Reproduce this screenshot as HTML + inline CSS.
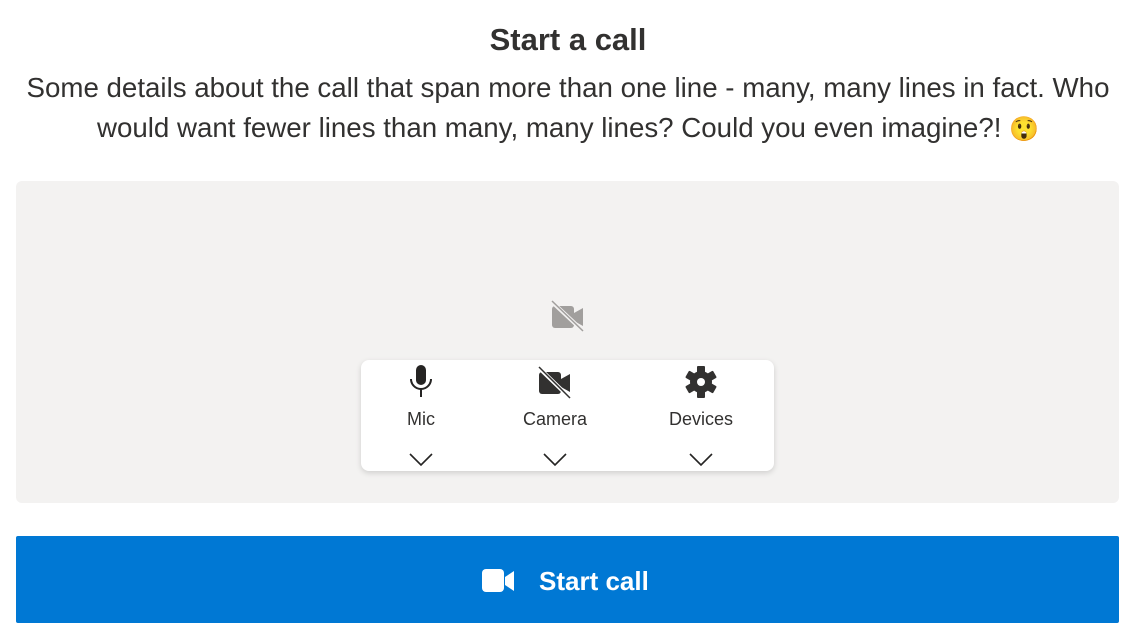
<!DOCTYPE html>
<html><head><style>
body{margin:0;width:1136px;height:640px;background:#fff;font-family:"Liberation Sans",sans-serif;color:#323130;position:relative;overflow:hidden}
.t{position:absolute;left:0;width:1136px;text-align:center;white-space:nowrap}
.panel{position:absolute;left:16px;top:181px;width:1103px;height:322px;background:#f3f2f1;border-radius:6px}
.bar{position:absolute;left:361px;top:360px;width:413px;height:111px;background:#fff;border-radius:8px;box-shadow:0 2px 6px rgba(0,0,0,.15)}
.item{position:absolute;top:0;width:120px;text-align:center}
.item svg{display:block;margin:0 auto}
.lbl{font-size:18px;position:absolute;top:49px;width:120px;text-align:center}
.chev{position:absolute;top:93px;left:48px}
.btn{position:absolute;left:16px;top:536px;width:1103px;height:87px;background:#0078d4;border-radius:2px;color:#fff}
</style></head><body>
<div class="t" style="top:22px;font-size:31px;font-weight:bold;">Start a call</div>
<div class="t" style="top:68px;font-size:27.7px;line-height:40px;">Some details about the call that span more than one line - many, many lines in fact. Who<br>would want fewer lines than many, many lines? Could you even imagine?! <span style="font-family:'Noto Color Emoji',sans-serif;font-size:24px">😲</span></div>
<div class="panel"></div>
<svg style="position:absolute;left:551px;top:300px" width="34" height="32" viewBox="0 0 34 32"><rect x="1" y="6" width="22" height="22" rx="3" fill="#a19f9d"/><path d="M23 13l9-5v18l-9-5z" fill="#a19f9d"/><path d="M0 1l32 30" stroke="#f3f2f1" stroke-width="4"/><path d="M1 1l31 30" stroke="#a19f9d" stroke-width="1.5"/></svg>
<div class="bar">
 <div class="item" style="left:0">
  <svg width="24" height="34" viewBox="0 0 24 34" style="margin-top:5px"><rect x="7" y="0" width="10" height="20" rx="5" fill="#252423"/><path d="M2 14a10 10 0 0 0 20 0" fill="none" stroke="#252423" stroke-width="2"/><path d="M12 24v8" stroke="#252423" stroke-width="2"/></svg>
  <div class="lbl">Mic</div><svg class="chev" width="24" height="14"><path d="M1 1l11 11L23 1" fill="none" stroke="#252423" stroke-width="1.6"/></svg></div>
 <div class="item" style="left:134px">
  <svg width="34" height="34" viewBox="0 0 34 34" style="margin-top:6px"><rect x="1" y="6" width="22" height="22" rx="3" fill="#323130"/><path d="M23 13l9-5v18l-9-5z" fill="#323130"/><path d="M0 1l32 31" stroke="#fff" stroke-width="4"/><path d="M1 1l31 31" stroke="#323130" stroke-width="1.5"/></svg>
  <div class="lbl">Camera</div><svg class="chev" width="24" height="14"><path d="M1 1l11 11L23 1" fill="none" stroke="#252423" stroke-width="1.6"/></svg></div>
 <div class="item" style="left:280px">
  <svg width="34" height="34" viewBox="-17 -17 34 34" style="margin-top:5px"><g fill="#323130"><circle r="11"/><g id="g"><rect x="-4" y="-16" width="8" height="8" rx="1"/></g><use href="#g" transform="rotate(60)"/><use href="#g" transform="rotate(120)"/><use href="#g" transform="rotate(180)"/><use href="#g" transform="rotate(240)"/><use href="#g" transform="rotate(300)"/></g><circle r="4" fill="#fff"/></svg>
  <div class="lbl">Devices</div><svg class="chev" width="24" height="14"><path d="M1 1l11 11L23 1" fill="none" stroke="#252423" stroke-width="1.6"/></svg></div>
</div>
<div class="btn">
 <svg style="position:absolute;left:466px;top:33px" width="34" height="24" viewBox="0 0 34 24"><rect x="0" y="0" width="22" height="23" rx="4" fill="#fff"/><path d="M23 8l9-6v20l-9-6z" fill="#fff"/></svg>
 <div style="position:absolute;left:523px;top:30px;font-size:26px;font-weight:bold;">Start call</div>
</div>
</body></html>
